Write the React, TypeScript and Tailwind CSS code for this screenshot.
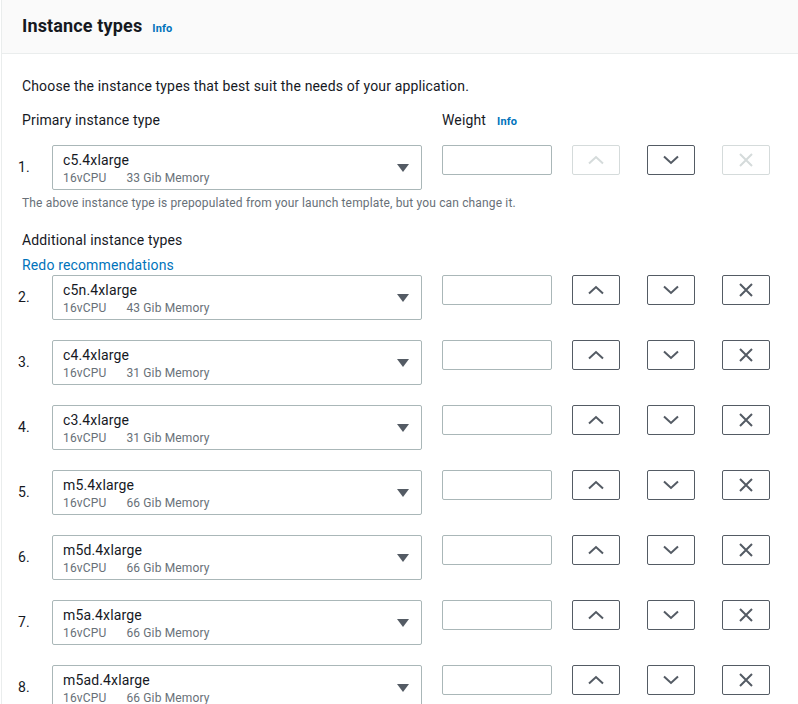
import React from "react";

type Row = { name: string; cpu: string; mem: string };

const rows: Row[] = [
  { name: "c5.4xlarge", cpu: "16vCPU", mem: "33 Gib Memory" },
  { name: "c5n.4xlarge", cpu: "16vCPU", mem: "43 Gib Memory" },
  { name: "c4.4xlarge", cpu: "16vCPU", mem: "31 Gib Memory" },
  { name: "c3.4xlarge", cpu: "16vCPU", mem: "31 Gib Memory" },
  { name: "m5.4xlarge", cpu: "16vCPU", mem: "66 Gib Memory" },
  { name: "m5d.4xlarge", cpu: "16vCPU", mem: "66 Gib Memory" },
  { name: "m5a.4xlarge", cpu: "16vCPU", mem: "66 Gib Memory" },
  { name: "m5ad.4xlarge", cpu: "16vCPU", mem: "66 Gib Memory" },
];

function ChevronUp() {
  return (
    <svg width="16" height="10" viewBox="0 0 16 10" fill="none" stroke="currentColor" strokeWidth="2">
      <path d="M1 8.5 8 2l7 6.5" />
    </svg>
  );
}

function ChevronDown() {
  return (
    <svg width="16" height="10" viewBox="0 0 16 10" fill="none" stroke="currentColor" strokeWidth="2">
      <path d="M1 1.5 8 8l7-6.5" />
    </svg>
  );
}

function Cross() {
  return (
    <svg width="14" height="14" viewBox="0 0 14 14" fill="none" stroke="currentColor" strokeWidth="2">
      <path d="M1 1l12 12M13 1 1 13" />
    </svg>
  );
}

function IconButton({ disabled, children }: { disabled?: boolean; children: React.ReactNode }) {
  return (
    <button
      className={
        disabled
          ? "w-[48px] h-[30px] rounded-[2px] border border-[#d5dbdb] text-[#d5dbdb] flex items-center justify-center bg-white"
          : "w-[48px] h-[30px] rounded-[2px] border border-[#545b64] text-[#545b64] flex items-center justify-center bg-white"
      }
    >
      {children}
    </button>
  );
}

function InstanceRow({ row, index }: { row: Row; index: number }) {
  const first = index === 0;
  return (
    <div className="flex items-start ml-[-4px]">
      <div className="w-[34px] pt-[12px] text-[14px] leading-[20px] text-[#16191f]">{index + 1}.</div>
      <div className="w-[370px] h-[45px] border border-[#aab7b8] rounded-[2px] pl-[10px] pr-[12px] pt-[5px] flex justify-between">
        <div>
          <div className="text-[14px] leading-[19px] text-[#16191f]">{row.name}</div>
          <div className="text-[12px] leading-[16px] text-[#687078] flex gap-[20px]">
            <span>{row.cpu}</span>
            <span>{row.mem}</span>
          </div>
        </div>
        <svg width="12" height="8" viewBox="0 0 12 8" className="mt-[13px]">
          <path d="M0 0h12L6 8z" fill="#545b64" />
        </svg>
      </div>
      <div className="ml-[20px] w-[110px] h-[30px] border border-[#aab7b8] rounded-[2px] bg-white" />
      <div className="ml-[20px]">
        <IconButton disabled={first}>
          <ChevronUp />
        </IconButton>
      </div>
      <div className="ml-[27px]">
        <IconButton>
          <ChevronDown />
        </IconButton>
      </div>
      <div className="ml-[27px]">
        <IconButton disabled={first}>
          <Cross />
        </IconButton>
      </div>
    </div>
  );
}

export default function App() {
  return (
    <div
      className="w-[798px] h-[704px] overflow-hidden bg-white tracking-[0.15px]"
      style={{ fontFamily: 'Roboto, "Open Sans", sans-serif' }}
    >
      <div className="ml-px border-l border-[#eaeded] h-full">
        <div className="h-[54px] bg-[#fafafa] border-b border-[#eaeded] px-[20px] flex items-center">
          <div className="flex items-baseline mb-[2px]">
            <h2 className="text-[18px] font-bold text-[#16191f] leading-[24px]">Instance types</h2>
            <span className="ml-[10px] text-[11px] font-bold text-[#0073bb]">Info</span>
          </div>
        </div>

        <div className="px-[20px] pt-[22px]">
          <p className="text-[14px] leading-[20px] text-[#16191f]">
            Choose the instance types that best suit the needs of your application.
          </p>

          <div className="mt-[14px] h-[20px] flex text-[14px] leading-[20px] text-[#16191f]">
            <div className="w-[420px]">Primary instance type</div>
            <div className="flex items-baseline h-[20px]">
              Weight
              <span className="ml-[11px] text-[11px] leading-[20px] font-bold text-[#0073bb]">Info</span>
            </div>
          </div>

          <div className="mt-[15px]">
            <InstanceRow row={rows[0]} index={0} />
          </div>

          <p className="mt-[5px] text-[12px] leading-[16px] text-[#687078]">
            The above instance type is prepopulated from your launch template, but you can change it.
          </p>

          <div className="mt-[19px] text-[14px] leading-[20px] text-[#16191f]">Additional instance types</div>
          <div className="mt-[5px] text-[14px] leading-[20px] text-[#0073bb]">Redo recommendations</div>

          <div className="flex flex-col gap-[20px]">
            {rows.slice(1).map((r, i) => (
              <InstanceRow key={r.name} row={r} index={i + 1} />
            ))}
          </div>
        </div>
      </div>
    </div>
  );
}
